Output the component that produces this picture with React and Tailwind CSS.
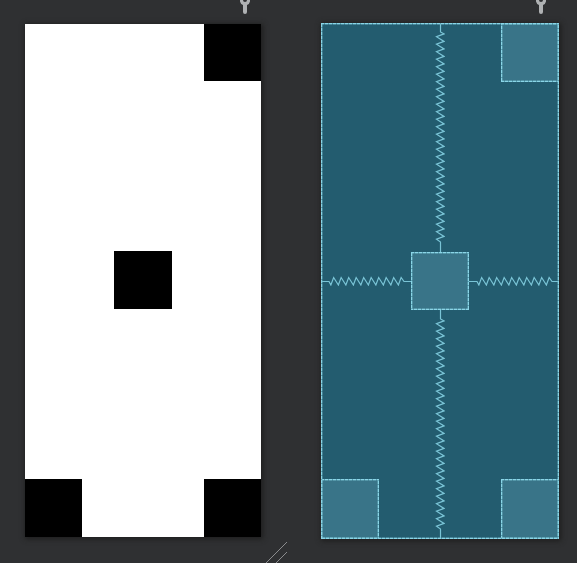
import React from "react";

function springPoints(length, teeth, lead, tail) {
  const step = (length - lead - tail) / teeth;
  const points = [[0, 5.5], [lead, 5.5]];
  for (let i = 0; i < teeth; i += 1) {
    const start = lead + i * step;
    points.push([start + step * 0.25, 9], [start + step * 0.62, 1.5]);
  }
  points.push([length - tail, 5.5], [length, 5.5]);
  return points;
}

function Spring({ length, teeth, lead, tail, vertical = false }) {
  const points = springPoints(length, teeth, lead, tail)
    .map(([along, across]) => (vertical ? `${across},${along}` : `${along},${across}`))
    .join(" ");
  return (
    <svg
      aria-hidden="true"
      className="block h-full w-full"
      viewBox={vertical ? `0 0 10 ${length}` : `0 0 ${length} 10`}
      preserveAspectRatio="none"
      fill="none"
      stroke="#7ac4d6"
      strokeWidth="1.2"
    >
      <polyline points={points} />
    </svg>
  );
}

function DashedFrame() {
  return (
    <svg aria-hidden="true" className="pointer-events-none absolute inset-0 h-full w-full overflow-hidden">
      <rect width="100%" height="100%" fill="none" stroke="#5ba3b5" strokeWidth="2.6" />
      <rect width="100%" height="100%" fill="none" stroke="#8ad5e7" strokeWidth="2.4" strokeDasharray="3 1" />
    </svg>
  );
}

function Block() {
  return (
    <div className="relative h-full w-[58px] bg-[#397488]">
      <DashedFrame />
    </div>
  );
}

function Wrench() {
  return (
    <svg aria-hidden="true" className="block" width="12" height="15" viewBox="0 0 12 15" fill="#afb1b3">
      <path d="M1 0V1.5Q1.5 4 4 5V12A2 2 0 0 0 8 12V5Q10.5 4 11 1.5V0H8Q8 2 6 2Q4 2 4 0Z" />
    </svg>
  );
}

function DesignSurface() {
  return (
    <section aria-label="Design" className="min-w-0">
      <div className="flex h-6 justify-end pr-[10px]"><Wrench /></div>
      <div className="flex h-[513px] flex-col justify-between bg-white shadow-[1px_1px_5px_1px_#1e1e1e]">
        <div className="flex justify-end"><div className="size-[57px] bg-black" /></div>
        <div className="flex justify-center"><div className="size-[58px] bg-black" /></div>
        <div className="flex justify-between">
          <div className="h-[58px] w-[57px] bg-black" />
          <div className="h-[58px] w-[57px] bg-black" />
        </div>
      </div>
    </section>
  );
}

function BlueprintSurface() {
  return (
    <section aria-label="Blueprint" className="min-w-0">
      <div className="flex h-[23px] justify-end pr-3"><Wrench /></div>
      <div className="relative grid h-[516px] grid-cols-[1fr_58px_1fr] grid-rows-[59px_170fr_58px_169fr_60px] bg-[#235c6f] shadow-[1px_1px_5px_1px_#1e1e1e]">
        <div className="col-start-3 row-start-1 justify-self-end"><Block /></div>
        <div className="col-start-2 row-start-1 row-end-3 w-[10px] justify-self-center"><Spring length={229} teeth={28} lead={9} tail={10} vertical /></div>
        <div className="col-start-1 row-start-3 h-[10px] self-center"><Spring length={90} teeth={10} lead={8} tail={7} /></div>
        <div className="col-start-2 row-start-3"><Block /></div>
        <div className="col-start-3 row-start-3 h-[10px] self-center"><Spring length={90} teeth={10} lead={8} tail={7} /></div>
        <div className="col-start-2 row-start-4 row-end-6 w-[10px] justify-self-center"><Spring length={229} teeth={28} lead={9} tail={10} vertical /></div>
        <div className="col-start-1 row-start-5"><Block /></div>
        <div className="col-start-3 row-start-5 justify-self-end"><Block /></div>
        <DashedFrame />
      </div>
    </section>
  );
}

export default function App() {
  return (
    <main className="min-h-screen bg-[#2f3032]">
      <div className="grid grid-cols-[236fr_238fr] gap-[60px] pr-[18px] pl-[25px]">
        <DesignSurface />
        <BlueprintSurface />
      </div>
      <div className="flex justify-center pt-[3px] pr-[23px]">
        <svg aria-hidden="true" className="block" width="22" height="21" viewBox="0 0 22 21" stroke="#8b8c8e" fill="none">
          <path d="M0 21L21 0M10 21L21 10" />
        </svg>
      </div>
    </main>
  );
}
